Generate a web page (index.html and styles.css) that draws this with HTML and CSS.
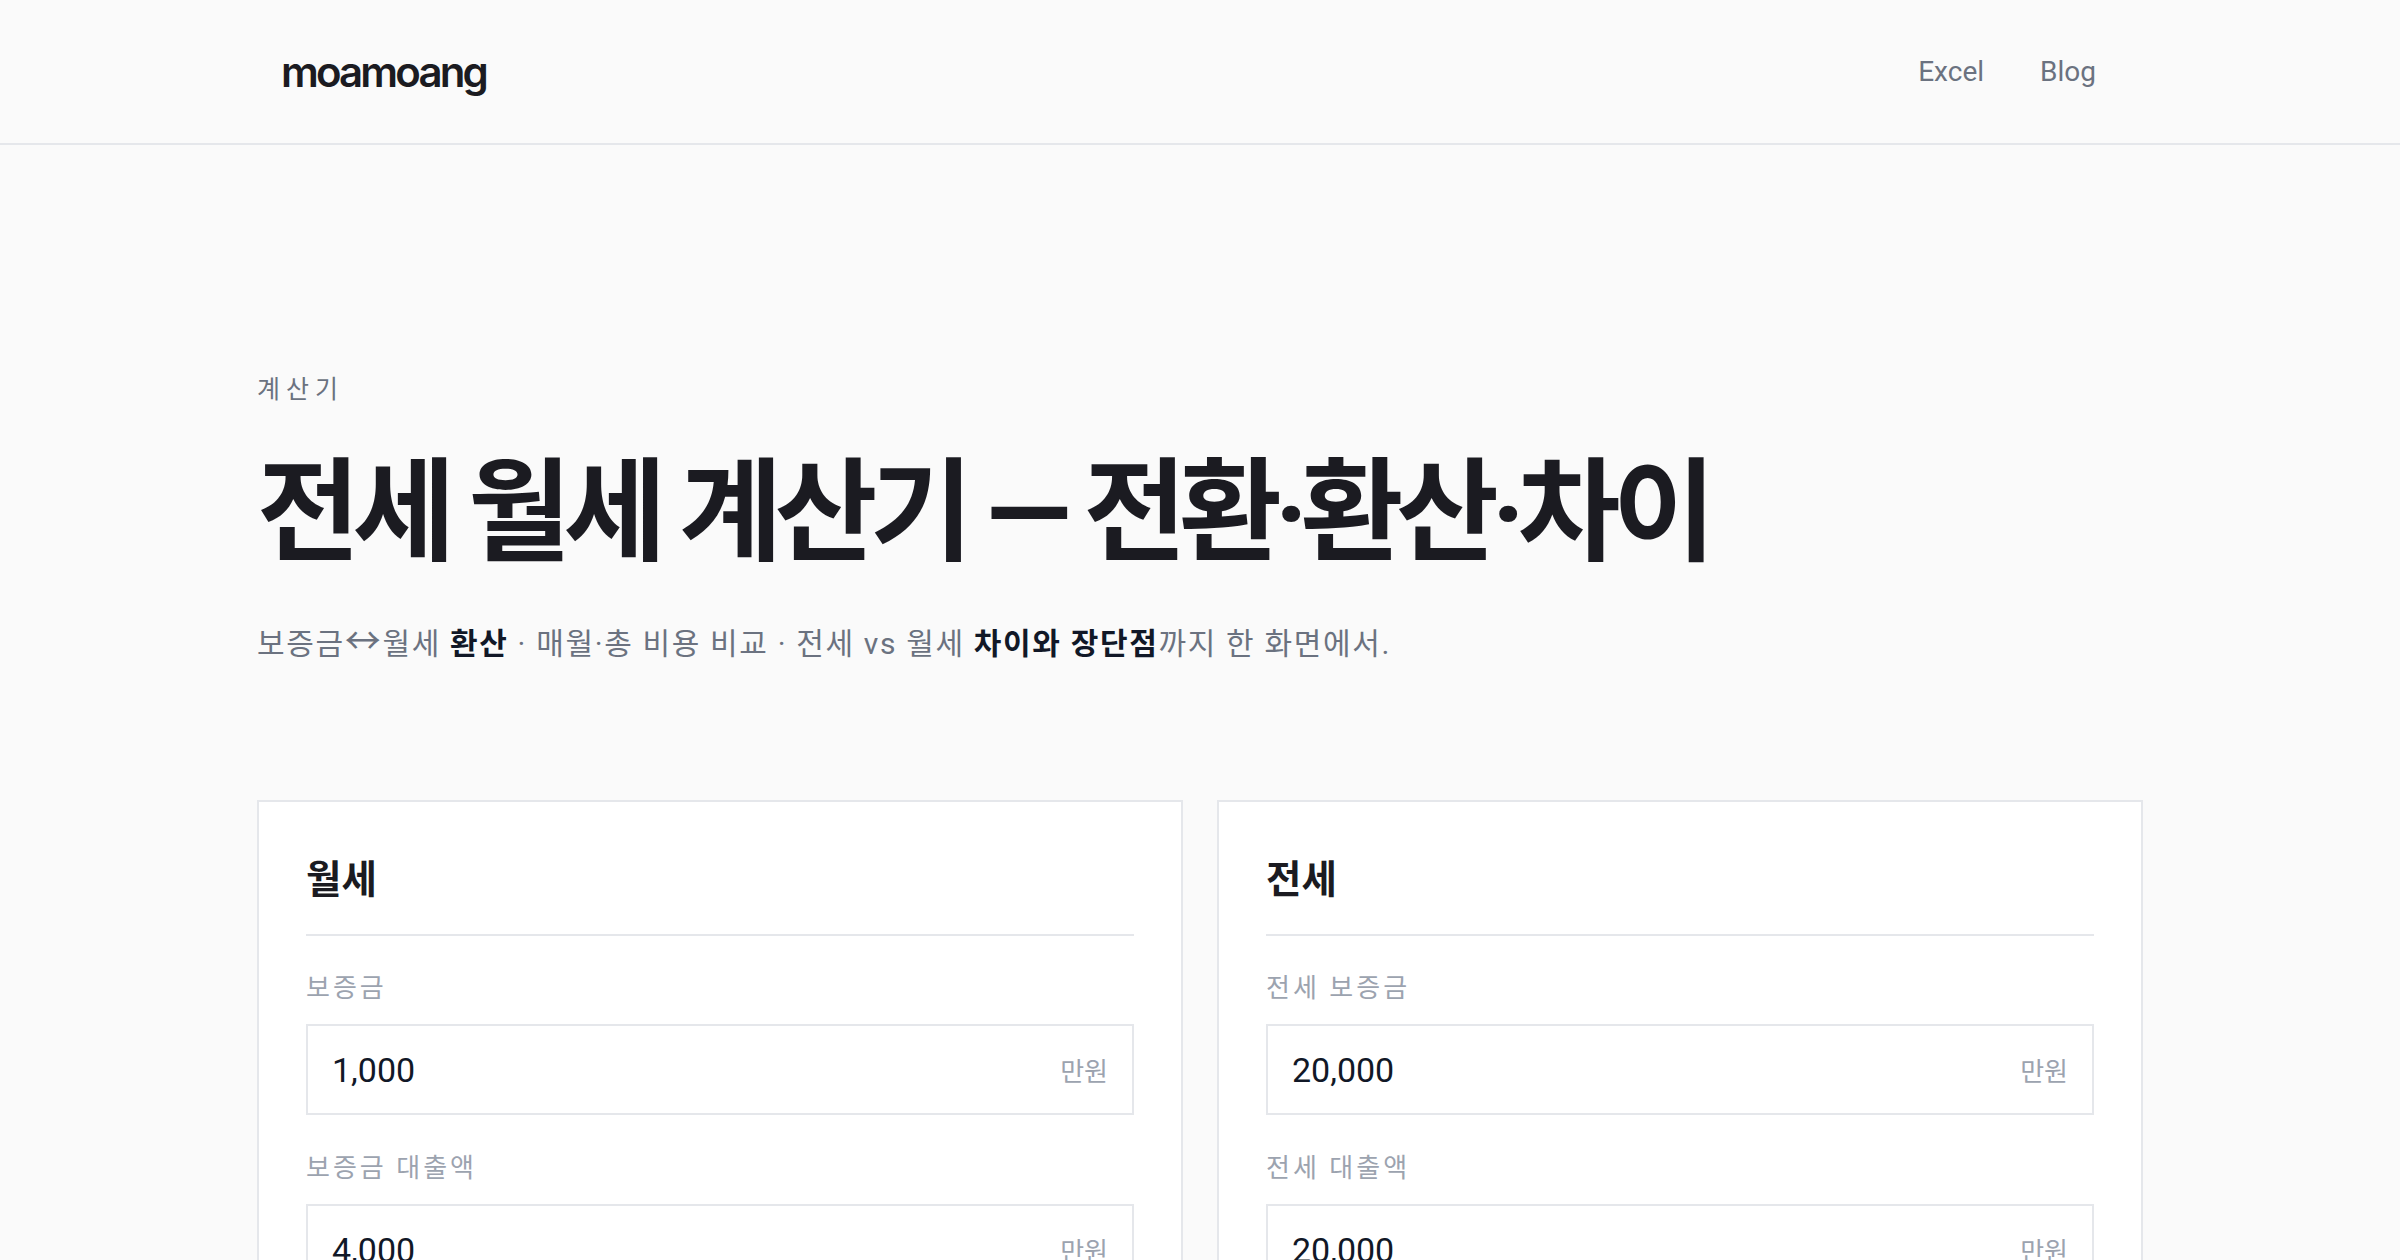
FILE: index.html
```html
<!DOCTYPE html>
<html lang="ko">
<head>
  <meta charset="UTF-8">
  <meta name="viewport" content="width=device-width, initial-scale=1.0">
  <title>전세 월세 계산기 — moamoang</title>
  <link rel="stylesheet" href="styles.css">
</head>
<body>
  <header class="site-header">
    <div class="header-inner">
      <a class="logo" href="#">moamoang</a>
      <nav class="nav">
        <a href="#">Excel</a>
        <a href="#">Blog</a>
      </nav>
    </div>
  </header>

  <main class="wrap">
    <p class="eyebrow">계산기</p>
    <h1 class="title">전세 월세 계산기 — 전환·환산·차이</h1>
    <p class="lead">보증금<span class="arrow">↔</span>월세 <b>환산</b> · 매월·총 비용 비교 · 전세 vs 월세 <b>차이와 장단점</b>까지 한 화면에서.</p>

    <!-- 월세 / 전세 입력 카드 -->
    <section class="calc">
      <div class="card">
        <h2>월세</h2>
        <div class="field">
          <label for="m-deposit">보증금</label>
          <div class="input-box">
            <input id="m-deposit" type="text" value="1,000">
            <span class="unit">만원</span>
          </div>
        </div>
        <div class="field">
          <label for="m-loan">보증금 대출액</label>
          <div class="input-box">
            <input id="m-loan" type="text" value="4,000">
            <span class="unit">만원</span>
          </div>
        </div>
        <div class="field">
          <label for="m-rent">월세</label>
          <div class="input-box">
            <input id="m-rent" type="text" value="60">
            <span class="unit">만원</span>
          </div>
        </div>
      </div>

      <div class="card">
        <h2>전세</h2>
        <div class="field">
          <label for="j-deposit">전세 보증금</label>
          <div class="input-box">
            <input id="j-deposit" type="text" value="20,000">
            <span class="unit">만원</span>
          </div>
        </div>
        <div class="field">
          <label for="j-loan">전세 대출액</label>
          <div class="input-box">
            <input id="j-loan" type="text" value="20,000">
            <span class="unit">만원</span>
          </div>
        </div>
        <div class="field">
          <label for="j-rate">대출 금리</label>
          <div class="input-box">
            <input id="j-rate" type="text" value="4.0">
            <span class="unit">%</span>
          </div>
        </div>
      </div>
    </section>
  </main>
</body>
</html>
```

FILE: styles.css
```css
body {
  margin: 0;
  background-color: #fafafa;
  color: #1b1b21;
  font-family: Roboto, "Noto Sans CJK KR", sans-serif;
}

a {
  text-decoration: none;
  color: inherit;
}

/* 상단 바 */
.site-header {
  border-bottom: 2px solid #e5e7eb;
}
.header-inner {
  max-width: 1886px;
  height: 143px;
  margin: 0 auto;
  padding: 0 47px 0 24px;
  box-sizing: border-box;
  display: flex;
  align-items: center;
  justify-content: space-between;
}
.logo {
  font-family: Inter, Roboto, sans-serif;
  font-size: 42px;
  font-weight: 600;
  letter-spacing: -0.068em;
  color: #1b1b21;
}
.nav {
  display: flex;
  gap: 56px;
  font-size: 28px;
  color: #6b7280;
}

/* 본문 */
.wrap {
  max-width: 1886px;
  margin: 0 auto;
  padding-top: 225px;
}
.eyebrow {
  margin: 0;
  font-size: 25px;
  line-height: 40px;
  letter-spacing: 6px;
  color: #6b7280;
}
.title {
  margin: 37px 0 0;
  font-size: 112px;
  line-height: 134px;
  font-weight: 700;
  letter-spacing: -0.068em;
}
.lead {
  margin: 39px 0 0;
  font-size: 30px;
  line-height: 48px;
  letter-spacing: 1.65px;
  color: #6b7280;
}
.lead .arrow {
  font-size: 36px;
  line-height: 1;
}
.lead b {
  color: #111827;
  font-weight: 700;
}

.calc {
  margin-top: 132px;
  display: grid;
  grid-template-columns: 1fr 1fr;
  gap: 34px;
}
.card {
  background-color: #fff;
  border: 2px solid #e5e7eb;
  padding: 49px 47px;
}
.card h2 {
  margin: 0;
  font-size: 38.5px;
  line-height: 58px;
  font-weight: 700;
  padding-bottom: 25px;
  border-bottom: 2px solid #e5e7eb;
}
.field {
  margin-top: 34px;
}
.card h2 + .field {
  margin-top: 33px;
}
.field label {
  display: block;
  font-size: 26px;
  line-height: 39px;
  letter-spacing: 3px;
  color: #9ca3af;
  margin-bottom: 16px;
}
.input-box {
  display: flex;
  align-items: center;
  height: 91px;
  box-sizing: border-box;
  border: 2px solid #e5e7eb;
  padding: 0 24px;
  background-color: #fff;
}
.input-box input {
  flex: 1;
  min-width: 0;
  border: none;
  outline: none;
  padding: 0;
  background: transparent;
  font-family: Roboto, "Noto Sans CJK KR", sans-serif;
  font-size: 34px;
  color: #111827;
}
.unit {
  font-size: 26px;
  color: #9ca3af;
}
```
